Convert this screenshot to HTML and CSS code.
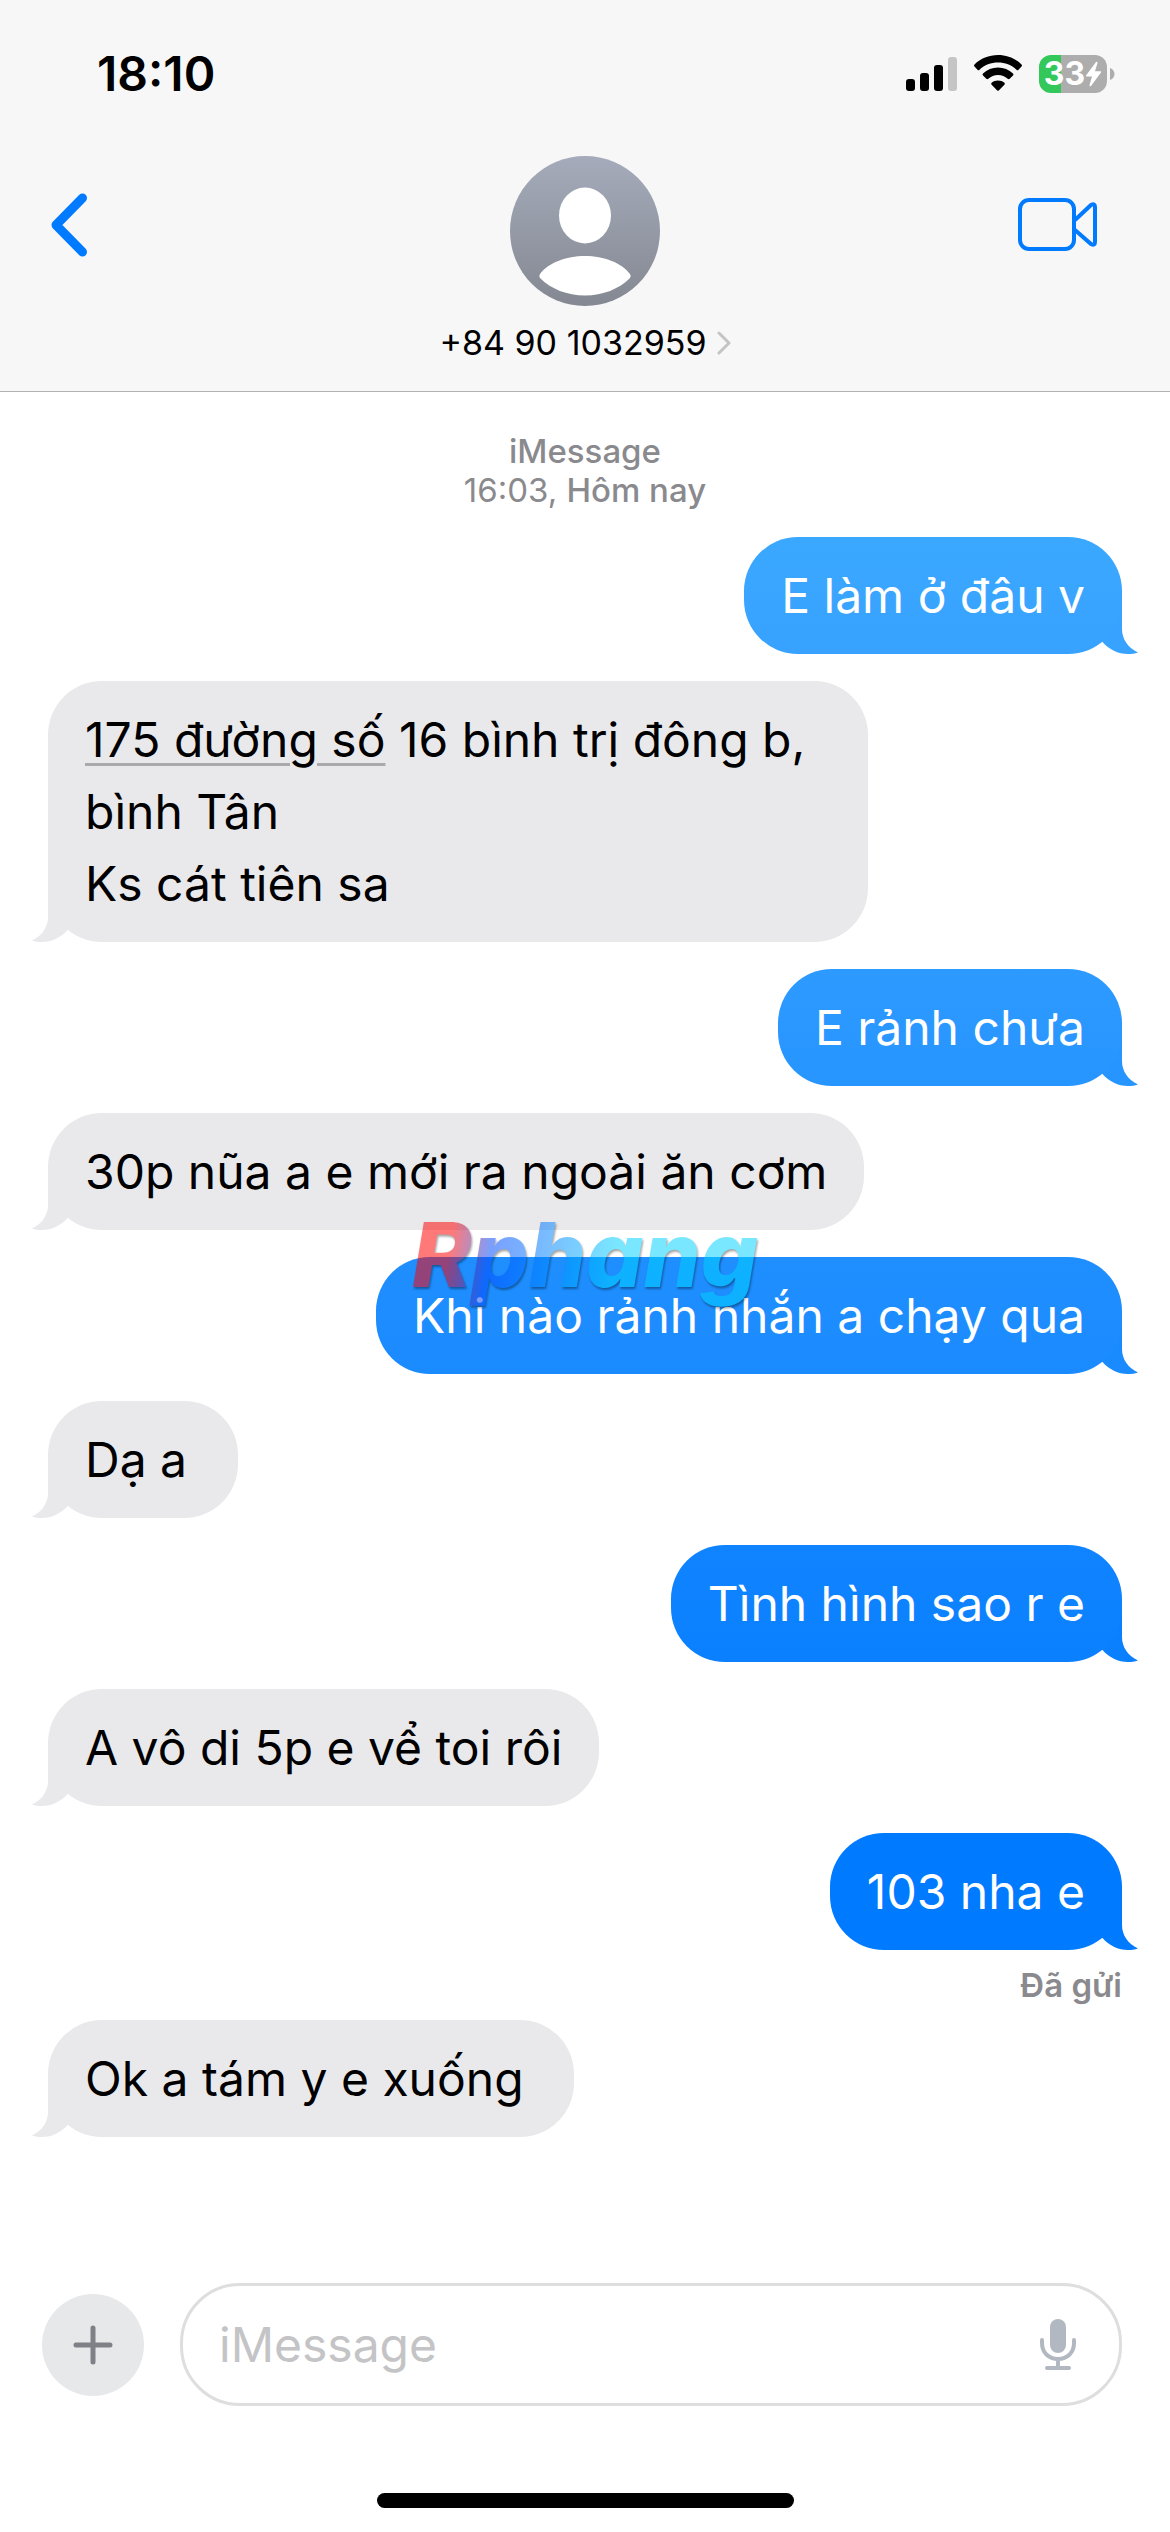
FILE: index.html
```html
<!DOCTYPE html>
<html lang="vi">
<head>
<meta charset="utf-8">
<meta name="viewport" content="width=device-width, initial-scale=1">
<title>iMessage</title>
<link rel="stylesheet" href="styles.css">
</head>
<body>
<svg class="defs" aria-hidden="true">
  <symbol id="tail" viewBox="0 0 56 60">
    <path d="M40 0V35C40 45 46 54 56 58.500C53 60 49 60 46 60C36 60 27 55.500 20.500 48L0 30V0Z"/>
  </symbol>
</svg>

<header class="header">
  <div class="status">
    <span class="clock">18:10</span>
    <div class="status-icons">
      <svg width="51" height="38" viewBox="0 0 51 38" aria-label="Signal">
        <rect x="0" y="24" width="9" height="12" rx="3"/>
        <rect x="14" y="18" width="9" height="18" rx="3"/>
        <rect x="28" y="10" width="9" height="26" rx="3"/>
        <rect x="42" y="2" width="9" height="34" rx="3" fill="#c5c5c5"/>
      </svg>
      <svg width="48" height="38" viewBox="0 0 48 38" aria-label="Wi-Fi">
        <path d="M24 0C33 0 41.500 3.500 47.500 9.500Q48.500 10.500 47.500 11.500L44.500 14.700Q43.500 15.700 42.500 14.700C37.500 10 31 7.500 24 7.500S10.500 10 5.500 14.700Q4.500 15.700 3.500 14.700L.5 11.500Q-.5 10.500 .5 9.500C6.500 3.500 15 0 24 0Z"/>
        <path d="M24 12.500C29.700 12.500 35 14.700 39 18.500Q40 19.500 39 20.500L35.700 23.800Q34.700 24.700 33.700 23.800C31 21.400 27.700 20 24 20S17 21.400 14.300 23.800Q13.300 24.700 12.300 23.800L9 20.500Q8 19.500 9 18.500C13 14.700 18.300 12.500 24 12.500Z"/>
        <path d="M24 25.500C26.500 25.500 28.700 26.300 30.400 27.700Q31.400 28.700 30.400 29.700L25 35.200Q24 36.200 23 35.200L17.600 29.700Q16.600 28.700 17.600 27.700C19.300 26.300 21.500 25.500 24 25.500Z"/>
      </svg>
      <div class="battery">
        <div class="battery-body">
          <span>33</span>
          <svg width="17" height="26" viewBox="0 0 17 26" aria-hidden="true"><path d="M11 1L1 14.500Q.5 15.500 1.500 15.500H7L4.500 24Q4.500 26 6 25L16 11.500Q16.700 10.300 15.500 10.300H10L12.500 2Q12.500 0 11 1Z" fill="#fff"/></svg>
        </div>
        <svg width="5" height="12" viewBox="0 0 5 12" aria-hidden="true"><path d="M0 0C6 2 6 10 0 12Z" fill="#adadad"/></svg>
      </div>
    </div>
  </div>
  <nav class="nav">
    <button class="icon-button back" type="button" aria-label="Quay lại">
      <svg width="36" height="64" viewBox="0 0 36 64"><path d="M31.500 5L5 32L31.500 59" fill="none" stroke="#007aff" stroke-width="9" stroke-linecap="round" stroke-linejoin="round"/></svg>
    </button>
    <button class="contact" type="button">
      <svg class="avatar" width="150" height="150" viewBox="0 0 150 150" aria-hidden="true">
        <defs><linearGradient id="avatar-fill" x1="0" y1="0" x2="0" y2="1"><stop offset="0" stop-color="#a5abba"/><stop offset="1" stop-color="#848892"/></linearGradient></defs>
        <circle cx="75" cy="75" r="75" fill="url(#avatar-fill)"/>
        <ellipse cx="75" cy="59.500" rx="26" ry="28" fill="#fff"/>
        <path d="M30 118C38 107 56 100 75 100S112 107 120 118Q121.500 120 120 122C109 133 93 139.500 75 139.500S41 133 30 122Q28.500 120 30 118Z" fill="#fff"/>
      </svg>
      <span class="contact-name">+84 90 1032959
        <svg width="14" height="24" viewBox="0 0 14 24" aria-hidden="true"><path d="M2 2L12 12L2 22" fill="none" stroke="#c4c4c6" stroke-width="3" stroke-linecap="round" stroke-linejoin="round"/></svg>
      </span>
    </button>
    <button class="icon-button video" type="button" aria-label="FaceTime">
      <svg width="80" height="54" viewBox="0 0 80 54"><g fill="none" stroke="#007aff" stroke-width="4"><rect x="3" y="2" width="54" height="49" rx="9"/><path d="M58 22L74 7Q78 5 78 9V44Q78 48 74 46L58 32"/></g></svg>
    </button>
  </nav>
</header>

<main class="thread">
  <p class="stamp"><b>iMessage</b><br>16:03, <b>Hôm nay</b></p>

  <div class="bubble sent tone-1">E làm ở đâu v<svg class="tail"><use href="#tail"/></svg></div>
  <div class="bubble received"><a href="#address">175 đường số</a> 16 bình trị đông b, bình Tân<br>Ks cát tiên sa<svg class="tail"><use href="#tail"/></svg></div>
  <div class="bubble sent tone-2">E rảnh chưa<svg class="tail"><use href="#tail"/></svg></div>
  <div class="bubble received">30p nũa a e mới ra ngoài ăn cơm<svg class="tail"><use href="#tail"/></svg></div>
  <div class="bubble sent tone-3">Khi nào rảnh nhắn a chạy qua<svg class="tail"><use href="#tail"/></svg></div>
  <div class="bubble received">Dạ a&nbsp;<svg class="tail"><use href="#tail"/></svg></div>
  <div class="bubble sent tone-4">Tình hình sao r e<svg class="tail"><use href="#tail"/></svg></div>
  <div class="bubble received">A vô di 5p e vể toi rôi<svg class="tail"><use href="#tail"/></svg></div>
  <div class="sent-group">
    <div class="bubble sent tone-5">103 nha e<svg class="tail"><use href="#tail"/></svg></div>
    <p class="receipt">Đã gửi</p>
  </div>
  <div class="bubble received">Ok a tám y e xuống&nbsp;<svg class="tail"><use href="#tail"/></svg></div>
</main>

<footer class="footer">
  <form class="composer">
    <button class="plus" type="button" aria-label="Thêm">
      <svg width="40" height="40" viewBox="0 0 40 40"><path d="M20 3V37M3 20H37" stroke="#808087" stroke-width="5" stroke-linecap="round"/></svg>
    </button>
    <div class="field">
      <input type="text" placeholder="iMessage" aria-label="iMessage">
      <button class="icon-button" type="button" aria-label="Đọc chính tả">
        <svg width="36" height="52" viewBox="0 0 36 52"><rect x="10" y="0" width="16" height="34" rx="8" fill="#b2b8c1"/><path d="M2 21V24C2 34 9 40 18 40S34 34 34 24V21M18 40V49M7 49H29" fill="none" stroke="#b2b8c1" stroke-width="4" stroke-linecap="round"/></svg>
      </button>
    </div>
  </form>
  <div class="home-bar"></div>
</footer>

<div class="watermark" aria-hidden="true"><span>Rphang</span></div>
</body>
</html>
```
FILE: styles.css
```css
* {
  box-sizing: border-box;
}

body {
  position: relative;
  margin: 0;
  min-height: 100vh;
  display: flex;
  flex-direction: column;
  background: #fff;
  color: #000;
  font-family: Inter, "Noto Sans", sans-serif;
  font-size: 48px;
  line-height: 72px;
}

button {
  margin: 0;
  padding: 0;
  border: 0;
  background: none;
  color: inherit;
  font: inherit;
  cursor: pointer;
}

p {
  margin: 0;
}

svg {
  display: block;
  flex: none;
}

.defs {
  position: absolute;
  width: 0;
  height: 0;
}

/* Header */

.header {
  background: #f7f7f7;
  border-bottom: 1px solid #b2b2b2;
  padding-bottom: 27px;
}

.status {
  display: flex;
  justify-content: space-between;
  align-items: center;
  height: 148px;
  padding: 0 55px 0 97px;
}

.clock {
  font-size: 48px;
  font-weight: 600;
}

.status-icons,
.battery,
.battery-body {
  display: flex;
  align-items: center;
}

.status-icons {
  gap: 17px;
}

.battery {
  gap: 3px;
}

.battery-body {
  justify-content: center;
  width: 68px;
  height: 38px;
  border-radius: 12px;
  background: linear-gradient(90deg, #34c759 22px, #adadad 22px);
  color: #fff;
  font-size: 32px;
  font-weight: 700;
  line-height: 38px;
}

.nav {
  display: grid;
  grid-template-columns: 1fr auto 1fr;
  align-items: start;
  padding: 8px 73px 0 51px;
}

.icon-button {
  display: flex;
}

.back {
  justify-self: start;
  padding-top: 37px;
}

.video {
  justify-self: end;
  padding-top: 42px;
}

.contact {
  display: flex;
  flex-direction: column;
  align-items: center;
  gap: 16px;
  /* evens out the unequal side padding so the avatar stays centred */
  margin: 0 0 0 22px;
}

.contact-name {
  display: flex;
  align-items: center;
  gap: 10px;
  font-size: 34px;
  line-height: 42px;
}

/* Thread */

.thread {
  flex: 1;
  display: flex;
  flex-direction: column;
  align-items: flex-start;
  gap: 27px;
  padding: 40px 48px 64px;
}

.stamp {
  align-self: center;
  color: #8a8a8e;
  font-size: 33px;
  line-height: 39px;
  text-align: center;
}

.stamp b {
  font-weight: 500;
}

.bubble {
  position: relative;
  max-width: 820px;
  padding: 23px 37px 22px;
  border-radius: 54px;
}

.received {
  background: #e9e9eb;
  --tail: #e9e9eb;
}

.received a {
  color: inherit;
  text-decoration: underline #a9a9ab 3px;
  text-underline-offset: 6px;
}

.sent {
  align-self: flex-end;
  background: linear-gradient(var(--top), var(--tail));
  color: #fff;
}

.tone-1 { --top: #3ba8ff; --tail: #37a2ff; }
.tone-2 { --top: #2c9aff; --tail: #2795ff; }
.tone-3 { --top: #1f8fff; --tail: #1a8aff; }
.tone-4 { --top: #1084ff; --tail: #0b80ff; }
.tone-5 { --top: #007aff; --tail: #007aff; }

.tail {
  position: absolute;
  right: -16px;
  bottom: 0;
  width: 56px;
  height: 60px;
  fill: var(--tail);
  z-index: -1;
}

.received .tail {
  right: auto;
  left: -16px;
  transform: scaleX(-1);
}

.sent-group {
  align-self: flex-end;
  display: flex;
  flex-direction: column;
  gap: 14px;
}

.receipt {
  color: #8a8a8e;
  font-size: 33px;
  font-weight: 600;
  line-height: 42px;
  text-align: right;
  margin-bottom: -13px;
}

/* Composer */

.footer {
  padding-bottom: 24px;
}

.composer {
  display: flex;
  align-items: center;
  gap: 36px;
  padding: 0 48px 0 42px;
}

.plus {
  display: flex;
  align-items: center;
  justify-content: center;
  flex: none;
  width: 102px;
  height: 102px;
  border-radius: 50%;
  background: #e7e8ea;
}

.field {
  flex: 1;
  display: flex;
  align-items: center;
  height: 123px;
  padding: 0 43px 0 36px;
  border: 3px solid #dedede;
  border-radius: 60px;
}

.field input {
  flex: 1;
  min-width: 0;
  padding: 0;
  border: 0;
  outline: 0;
  background: none;
  font: inherit;
}

.field input::placeholder {
  color: #c4c4c6;
}

.home-bar {
  width: 417px;
  height: 15px;
  margin: 87px auto 0;
  border-radius: 8px;
  background: #000;
}

/* Watermark */

.watermark {
  position: absolute;
  inset: 0;
  display: grid;
  place-items: center;
  padding-bottom: 22px;
  pointer-events: none;
}

.watermark span {
  padding: 0 8px;
  background: linear-gradient(100deg, #f00 14%, #0048ff 25%, #008cff 42%, #00d2ff 58%);
  background-clip: text;
  -webkit-background-clip: text;
  color: transparent;
  font-size: 90px;
  font-style: italic;
  font-weight: 800;
  line-height: 104px;
  opacity: 0.52;
  filter: drop-shadow(1px 2px 1px rgba(0, 0, 0, 0.7));
}
```
